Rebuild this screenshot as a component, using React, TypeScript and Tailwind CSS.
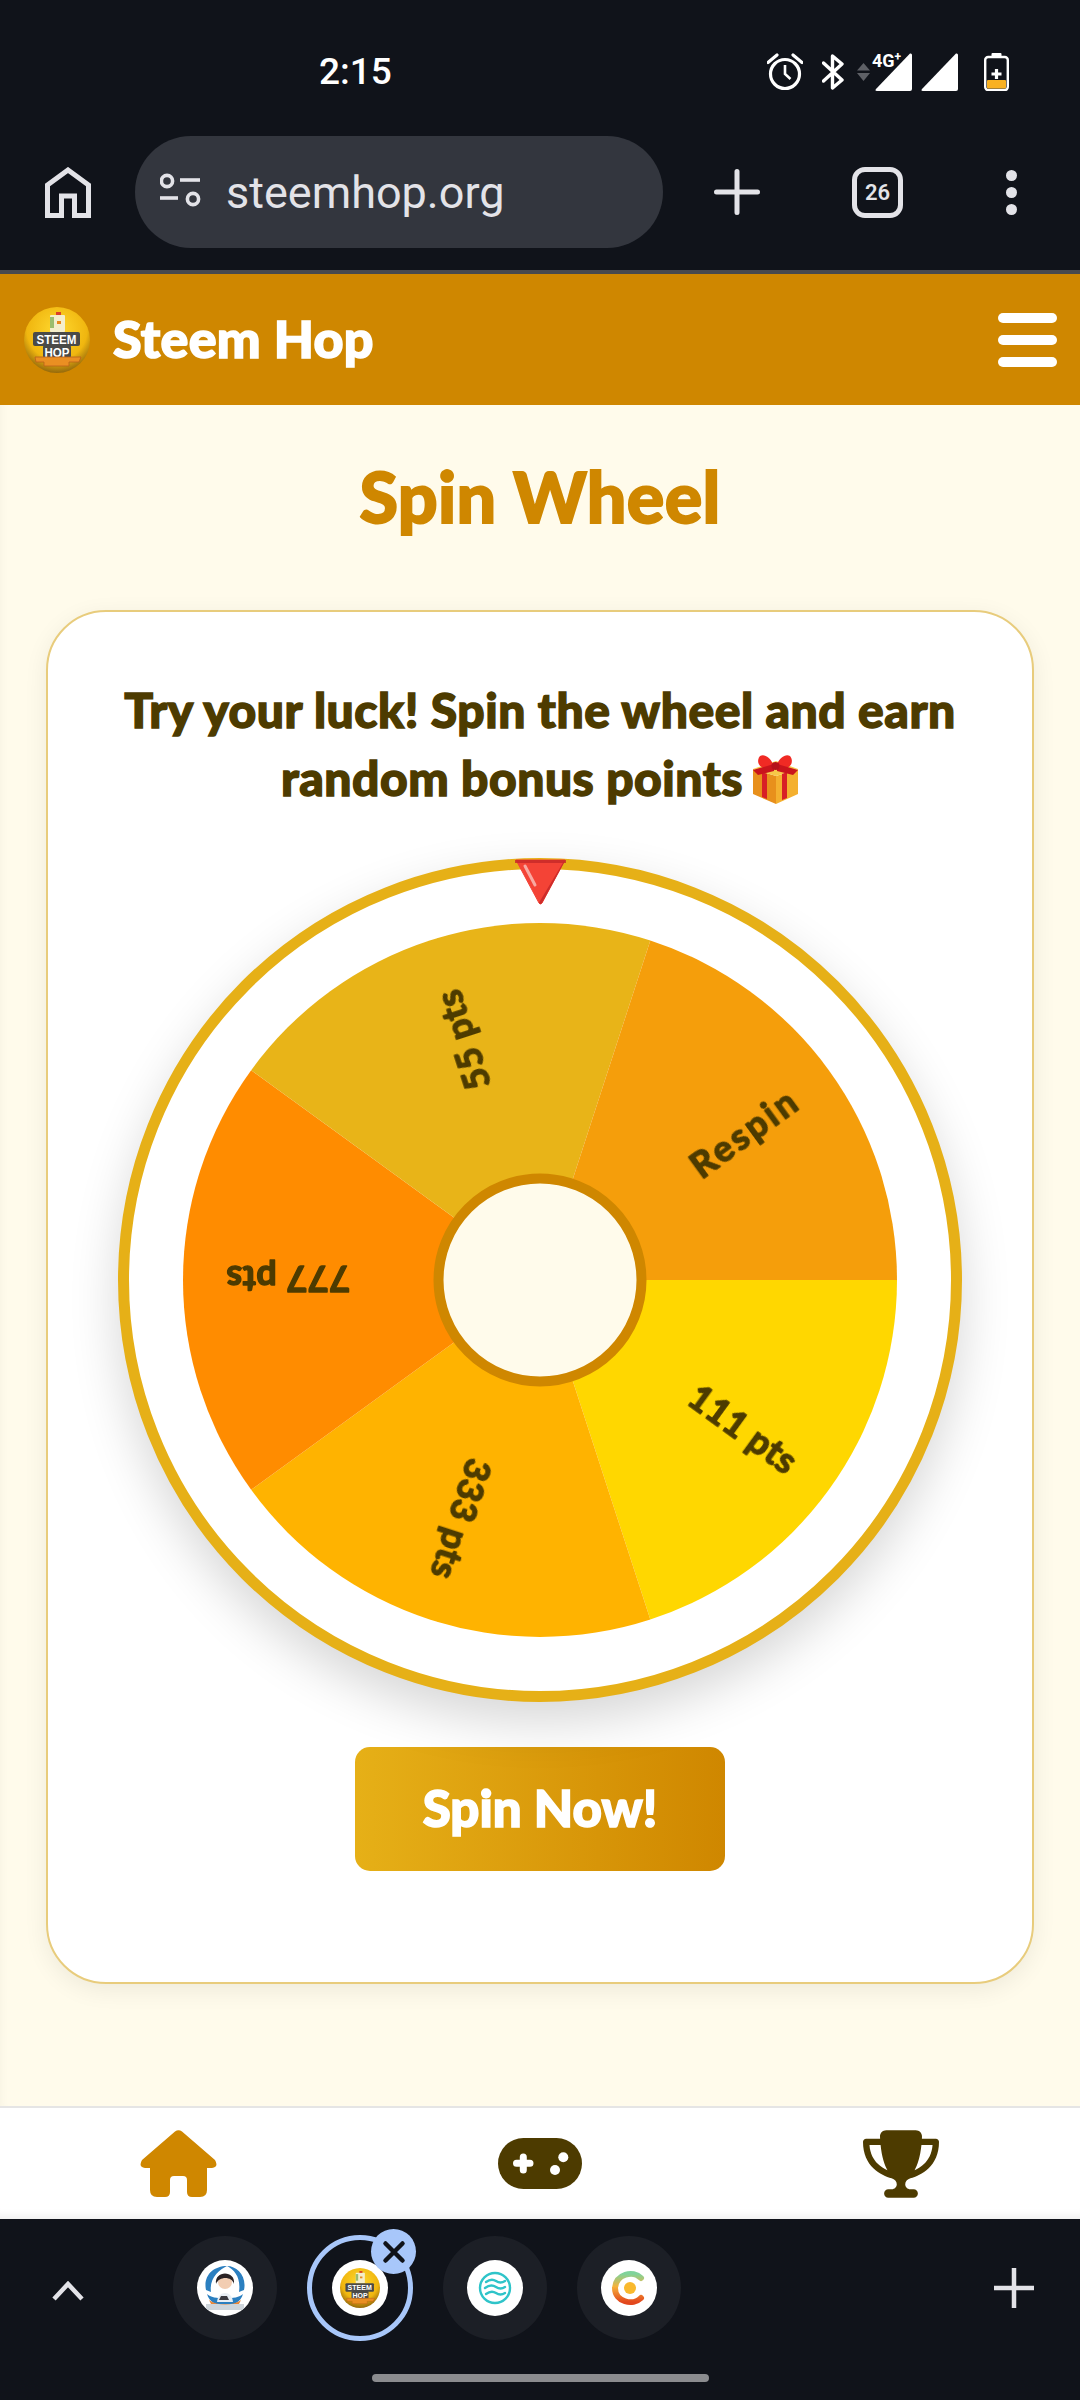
import React from "react";
import { FaTrophy } from "react-icons/fa6";

const slices = [
  { c: "#FFD700", label: "111 pts" },
  { c: "#FFB300", label: "333 pts" },
  { c: "#FF8C00", label: "777 pts" },
  { c: "#E8B418", label: "55 pts" },
  { c: "#F59E0B", label: "Respin" },
];

function wedge(i: number) {
  const r = 357;
  const a0 = (i * 72 * Math.PI) / 180;
  const a1 = ((i + 1) * 72 * Math.PI) / 180;
  return `M0 0 L${r * Math.cos(a0)} ${r * Math.sin(a0)} A${r} ${r} 0 0 1 ${r * Math.cos(a1)} ${r * Math.sin(a1)} Z`;
}

function Wheel() {
  return (
    <div className="relative flex h-[844px] w-[844px] items-center justify-center rounded-full border-[11px] border-[#e6b017] bg-white shadow-[0_20px_50px_rgba(0,0,0,0.16)]">
      <svg width="716" height="716" viewBox="-358 -358 716 716" className="blur-[0.5px]">
        {slices.map((s, i) => (
          <path key={s.label} d={wedge(i)} fill={s.c} />
        ))}
        <g className="blur-[0.7px]">
          {slices.map((s, i) => (
            <text
              key={s.label}
              transform={`rotate(${36 + i * 72}) translate(252 0)`}
              textAnchor="middle"
              dominantBaseline="central"
              fill="#4d3b00"
              stroke="#4d3b00"
              strokeWidth="1.4"
              strokeLinejoin="round"
              fontFamily="Lato, sans-serif"
              fontWeight="700"
              fontSize="36"
              letterSpacing={s.label === "Respin" ? "3" : "0.5"}
            >
              {s.label}
            </text>
          ))}
        </g>
        <circle r="101.5" fill="#fffbeb" stroke="#cf8700" strokeWidth="10" />
      </svg>
      <svg className="absolute left-[386px] top-[-10px]" width="51" height="46" viewBox="0 0 51 46">
        <path d="M1 1 H50 L27 44 Q25.5 46 24 44 Z" fill="#f44336" stroke="#f44336" strokeWidth="1" strokeLinejoin="round" />
        <path d="M49 2 H50 L27 44 Q25.5 46 24 44 L25 42 Z" fill="#c62828" opacity="0.85" />
        <path d="M0 1 H51 V4 H0 Z" fill="#c62828" opacity="0.8" />
        <path d="M10 7 L20 26" stroke="#f8a9a2" strokeWidth="3" strokeLinecap="round" />
      </svg>
    </div>
  );
}

function Logo({ size }: { size: number }) {
  const id = `lg${size}`;
  return (
    <svg width={size} height={size} viewBox="0 0 66 66">
      <defs>
        <radialGradient id={id} cx="50%" cy="35%" r="65%">
          <stop offset="0%" stopColor="#ffd92f" />
          <stop offset="70%" stopColor="#f0b60f" />
          <stop offset="100%" stopColor="#94690c" />
        </radialGradient>
      </defs>
      <circle cx="33" cy="33" r="33" fill={`url(#${id})`} />
      <rect x="26" y="8" width="15" height="17" rx="1" fill="#f4eecb" />
      <rect x="26" y="10" width="4" height="11" fill="#9bbd6e" />
      <rect x="32" y="5" width="5" height="3" fill="#d9402a" />
      <rect x="33" y="14" width="4" height="3" fill="#e98a1c" />
      <rect x="9" y="25" width="47" height="14" rx="2" fill="#4a4a48" />
      <rect x="19" y="38" width="28" height="13" rx="2" fill="#4a4a48" />
      <text x="32.5" y="37" textAnchor="middle" fontFamily="Liberation Sans, sans-serif" fontWeight="700" fontSize="13" fill="#fff" textLength="40" lengthAdjust="spacingAndGlyphs">STEEM</text>
      <text x="33" y="49.5" textAnchor="middle" fontFamily="Liberation Sans, sans-serif" fontWeight="700" fontSize="13" fill="#fff" textLength="25" lengthAdjust="spacingAndGlyphs">HOP</text>
      <path d="M11 50 H57 L55 55 H45 V59 H20 V55 H12 Z" fill="#ea8f22" stroke="#b9601a" strokeWidth="0.8" />
    </svg>
  );
}

function Gift() {
  return (
    <svg className="ml-[9px] inline-block align-[-8px]" width="47" height="50" viewBox="0 0 47 50">
      <path d="M1 15 L24 22 V50 L1 40 Z" fill="#e8901c" />
      <path d="M46 15 L24 22 V50 L46 40 Z" fill="#f4b02f" />
      <path d="M1 15 L24 7 L46 15 L24 22 Z" fill="#f7c948" />
      <path d="M10 18 V43 L15 45 V20 Z" fill="#d81f26" />
      <path d="M35 18 V44 L30 46 V20 Z" fill="#d81f26" />
      <path d="M22 13 C8 18 3 8 8 2 C13 -1 20 5 22 13 Z" fill="#f02a24" />
      <path d="M24 13 C38 18 43 8 38 2 C33 -1 26 5 24 13 Z" fill="#f02a24" />
      <path d="M1 16 L22 10 V17 L6 21 Z M46 16 L25 10 V17 L41 21 Z" fill="#c9141c" />
      <circle cx="23.5" cy="12" r="4" fill="#b5121a" />
    </svg>
  );
}

function TabCircle({ selected, children }: { selected?: boolean; children: React.ReactNode }) {
  return (
    <div
      className={
        selected
          ? "relative flex h-[106px] w-[106px] items-center justify-center rounded-full border-[5px] border-[#a8c7fa] bg-[#10131a]"
          : "relative flex h-[104px] w-[104px] items-center justify-center rounded-full bg-[#1c1f26]"
      }
    >
      <div className="flex h-[56px] w-[56px] items-center justify-center overflow-hidden rounded-full bg-white">
        {children}
      </div>
      {selected && (
        <div className="absolute left-[59px] top-[-11px] flex h-[45px] w-[45px] items-center justify-center rounded-full bg-[#a8c7fa]">
          <svg width="24" height="24" viewBox="0 0 24 24">
            <path d="M3.5 3.5 L20.5 20.5 M20.5 3.5 L3.5 20.5" stroke="#10131a" strokeWidth="4.5" strokeLinecap="round" />
          </svg>
        </div>
      )}
    </div>
  );
}

export default function App() {
  const rounded = "[font-family:Lato,sans-serif] font-black";
  return (
    <div className="flex h-[2400px] w-[1080px] flex-col overflow-hidden bg-[#fffbeb]">
      {/* Browser top */}
      <div className="h-[274px] shrink-0 border-b-[4px] border-[#48494d] bg-[#10131a]">
        <div className="mt-[53px] flex h-[38px] items-center pl-[319px] pr-[71px] text-white">
          <span className="[font-family:Roboto,sans-serif] text-[37px] font-medium leading-[38px]">2:15</span>
          <div className="ml-auto flex items-center">
            <svg width="36" height="38" viewBox="0 0 36 38" fill="none" stroke="#fff" strokeWidth="3.2">
              <circle cx="18" cy="21" r="14.5" />
              <path d="M18 12 V21 L23.5 26" strokeWidth="2.6" />
              <path d="M1 9.5 L10 2 M35 9.5 L26 2" strokeLinecap="round" />
            </svg>
            <svg className="ml-[19px]" width="22" height="36" viewBox="0 0 22 36" fill="none" stroke="#fff" strokeWidth="3.4">
              <path d="M1.5 9 L20 26 L10.5 34 V2 L20 10 L1.5 27" strokeLinejoin="round" strokeLinecap="round" />
            </svg>
            <svg className="ml-[13px]" width="13" height="18" viewBox="0 0 13 18" fill="#5e6066">
              <path d="M6.5 0 L13 7.5 H0 Z M0 10 H13 L6.5 18 Z" />
            </svg>
            <div className="relative ml-[5px]">
              <svg className="block" width="37" height="38" viewBox="0 0 37 38" fill="#fff">
                <path d="M35 0.5 Q37 0 37 2 V36 Q37 38 35 38 H2 Q-0.5 38 1 36 Z" />
              </svg>
              <span className="absolute left-[-3px] top-[0px] [font-family:Roboto,sans-serif] text-[18px] font-bold leading-[16px] [text-shadow:0_0_2px_#10131a]">
                4G<sup className="text-[12px] leading-none">+</sup>
              </span>
            </div>
            <svg className="ml-[9px]" width="37" height="38" viewBox="0 0 37 38" fill="#fff">
              <path d="M35 0.5 Q37 0 37 2 V36 Q37 38 35 38 H2 Q-0.5 38 1 36 Z" />
            </svg>
            <svg className="ml-[26px]" width="25" height="38" viewBox="0 0 25 38">
              <rect x="7.5" y="0" width="10" height="5" rx="1" fill="#fff" />
              <rect x="1.2" y="4" width="22.6" height="33" rx="3" fill="#10131a" stroke="#fff" strokeWidth="2.4" />
              <rect x="3" y="27" width="19" height="8.5" rx="1" fill="#f9b122" />
              <path d="M12.5 15 V27 M6.5 21 H18.5" stroke="#10131a" strokeWidth="7" />
              <path d="M12.5 16 V26 M7.5 21 H17.5" stroke="#fff" strokeWidth="3.2" />
            </svg>
          </div>
        </div>
        <div className="mt-[45px] flex items-center pl-[45px]">
          <svg width="46" height="51" viewBox="0 0 46 51" fill="none" stroke="#e3e3e8" strokeWidth="5">
            <path d="M2.5 48.5 V18 L23 3 L43.5 18 V48.5 H29.5 V29 H16.5 V48.5 Z" />
          </svg>
          <div className="ml-[44px] flex h-[112px] w-[528px] items-center rounded-full bg-[#33363e] pl-[25px]">
            <svg width="42" height="40" viewBox="0 0 42 40" fill="none" stroke="#e3e3e8" strokeWidth="3.6">
              <circle cx="7" cy="9" r="5.6" />
              <path d="M20 8 H40" />
              <path d="M0 26 H18" />
              <circle cx="33" cy="27" r="5.6" />
            </svg>
            <span className="ml-[24px] mt-[2px] [font-family:Roboto,sans-serif] text-[45px] leading-[48px] text-[#e3e3e8]">steemhop.org</span>
          </div>
          <svg className="ml-[51px]" width="46" height="46" viewBox="0 0 46 46" stroke="#e3e3e8" strokeWidth="5" strokeLinecap="round">
            <path d="M23 2.5 V43.5 M2.5 23 H43.5" />
          </svg>
          <div className="ml-[92px] flex h-[51px] w-[51px] items-center justify-center rounded-[13px] border-[5px] border-[#e3e3e8] [font-family:Roboto,sans-serif] text-[22px] font-semibold text-[#e3e3e8]">
            26
          </div>
          <div className="ml-[103px] flex flex-col gap-[6px]">
            <div className="h-[11px] w-[11px] rounded-full bg-[#e3e3e8]" />
            <div className="h-[11px] w-[11px] rounded-full bg-[#e3e3e8]" />
            <div className="h-[11px] w-[11px] rounded-full bg-[#e3e3e8]" />
          </div>
        </div>
      </div>

      {/* Site header */}
      <header className="flex h-[131px] shrink-0 items-center bg-[#cf8700] pl-[24px] pr-[23px]">
        <Logo size={66} />
        <span className={`mb-[4px] ml-[23px] text-[52px] leading-none tracking-[0.3px] text-white [-webkit-text-stroke:1.6px_currentColor] ${rounded}`}>Steem Hop</span>
        <div className="ml-auto flex w-[59px] flex-col gap-[12px]">
          <div className="h-[10px] rounded-full bg-white" />
          <div className="h-[10px] rounded-full bg-white" />
          <div className="h-[10px] rounded-full bg-white" />
        </div>
      </header>

      {/* Content */}
      <main className="flex flex-1 flex-col items-center bg-[#fffbeb] px-[46px] shadow-[inset_8px_0_8px_-6px_rgba(0,0,0,0.03)]">
        <h1 className={`mt-[57px] h-[68px] text-[70px] leading-[68px] tracking-[0.3px] text-[#cf8700] [-webkit-text-stroke:1.8px_currentColor] ${rounded}`}>Spin Wheel</h1>
        <section className="mt-[80px] flex h-[1374px] w-[988px] flex-col items-center rounded-[60px] border-2 border-[#e8cc7c] bg-white shadow-[0_6px_24px_rgba(0,0,0,0.07)]">
          <p className={`mt-[64px] text-center text-[48px] leading-[68px] tracking-[0.5px] text-[#4d3b00] [-webkit-text-stroke:1.4px_currentColor] ${rounded}`}>
            Try your luck! Spin the wheel and earn
            <br />
            random bonus points
            <Gift />
          </p>
          <div className="mt-[46px]">
            <Wheel />
          </div>
          <button className={`mt-[45px] flex h-[124px] w-[370px] items-center justify-center rounded-[15px] bg-gradient-to-r from-[#e6b017] to-[#cf8700] pb-[4px] text-[51px] leading-none text-white [-webkit-text-stroke:1.6px_currentColor] ${rounded}`}>
            Spin Now!
          </button>
        </section>
      </main>

      {/* Bottom nav */}
      <nav className="flex h-[113px] shrink-0 items-start border-t-2 border-[#e5e5e5] bg-white pl-[140px] pt-[22px] shadow-[inset_0_-10px_10px_-8px_rgba(0,0,0,0.08)]">
        <svg width="77" height="68" viewBox="0 0 77 68" fill="#cf8700">
          <path d="M35 1.5 Q38.5 -1 42 1.5 L75 30 Q79 37 72 38 H67 V60 Q67 67 60 67 H52 Q47 67 47 62 V50 Q47 46 43 46 H34 Q30 46 30 50 V62 Q30 67 25 67 H17 Q10 67 10 60 V38 H5 Q-2 37 2 30 Z" />
        </svg>
        <svg className="ml-[281px] mt-[8px]" width="84" height="51" viewBox="0 0 84 51">
          <rect width="84" height="51" rx="25.5" fill="#4d3b00" />
          <path d="M25.3 19 V32 M18.5 25.3 H32" stroke="#fff" strokeWidth="7" strokeLinecap="round" />
          <circle cx="65.3" cy="19.3" r="5" fill="#fff" />
          <circle cx="57" cy="32" r="5" fill="#fff" />
        </svg>
        <FaTrophy className="ml-[281px] h-[68px] w-[76px] text-[#4d3b00]" />
      </nav>

      {/* Browser bottom */}
      <div className="h-[181px] shrink-0 bg-[#10131a]">
        <div className="flex items-center pl-[52px] pt-[16px]">
          <svg className="mt-[6px]" width="32" height="20" viewBox="0 0 32 20" fill="none" stroke="#e3e3e8" strokeWidth="4.5">
            <path d="M2 18 L16 3 L30 18" />
          </svg>
          <div className="ml-[89px] flex items-center gap-[30px]">
            <TabCircle>
              <svg width="56" height="56" viewBox="0 0 56 56">
                <path d="M9 30 C6 16 16 6 30 6 C22 10 12 18 14 32 Z" fill="#2b7fc0" />
                <path d="M47 30 C50 16 40 6 30 6 C38 10 44 18 42 32 Z" fill="#2b7fc0" />
                <path d="M10 34 C16 40 40 40 46 34 C44 42 36 46 28 46 C20 46 12 42 10 34 Z" fill="#2b7fc0" />
                <circle cx="28" cy="22" r="7" fill="#f2cdb2" />
                <path d="M19 24 C17 10 39 10 37 24 C35 16 22 16 19 24 Z" fill="#2a2224" />
                <path d="M20 42 C21 30 35 30 36 42 Z" fill="#e8eef4" />
                <path d="M22 40 L32 40 L30 36 L24 36 Z" fill="#3a3a40" />
                <rect x="9" y="44" width="38" height="6" fill="#cfd6dc" />
                <path d="M12 40 C20 46 36 46 44 40 L42 44 H14 Z" fill="#e8873a" />
              </svg>
            </TabCircle>
            <TabCircle selected>
              <Logo size={40} />
            </TabCircle>
            <TabCircle>
              <svg width="34" height="34" viewBox="0 0 34 34" fill="none" stroke="#2fc4c9" strokeWidth="2.4" strokeLinecap="round">
                <circle cx="17" cy="17" r="15" />
                <path d="M8 11 C12 8 15 8 18 10 C21 12 24 12 27 10" />
                <path d="M7 17 C11 14 15 14 18 16 C21 18 24 18 27 16" />
                <path d="M8 23 C12 20 15 20 18 22 C21 24 24 24 27 22" />
              </svg>
            </TabCircle>
            <TabCircle>
              <svg width="36" height="36" viewBox="0 0 36 36" fill="none" strokeWidth="6" strokeLinecap="round">
                <defs>
                  <linearGradient id="cg" x1="0" y1="0" x2="0" y2="1">
                    <stop offset="0%" stopColor="#7fd39b" />
                    <stop offset="45%" stopColor="#f6b23a" />
                    <stop offset="100%" stopColor="#e2471d" />
                  </linearGradient>
                </defs>
                <path d="M30 8 C22 0 5 4 4 18 C4 32 22 36 30 28" stroke="url(#cg)" />
                <circle cx="19" cy="18" r="6" fill="#f9b92e" stroke="none" />
              </svg>
            </TabCircle>
          </div>
          <svg className="ml-[313px]" width="40" height="40" viewBox="0 0 40 40" stroke="#e3e3e8" strokeWidth="4.5">
            <path d="M20 0 V40 M0 20 H40" />
          </svg>
        </div>
        <div className="mx-auto mt-[33px] h-[8px] w-[337px] rounded-full bg-[#8b8c8f]" />
      </div>
    </div>
  );
}
